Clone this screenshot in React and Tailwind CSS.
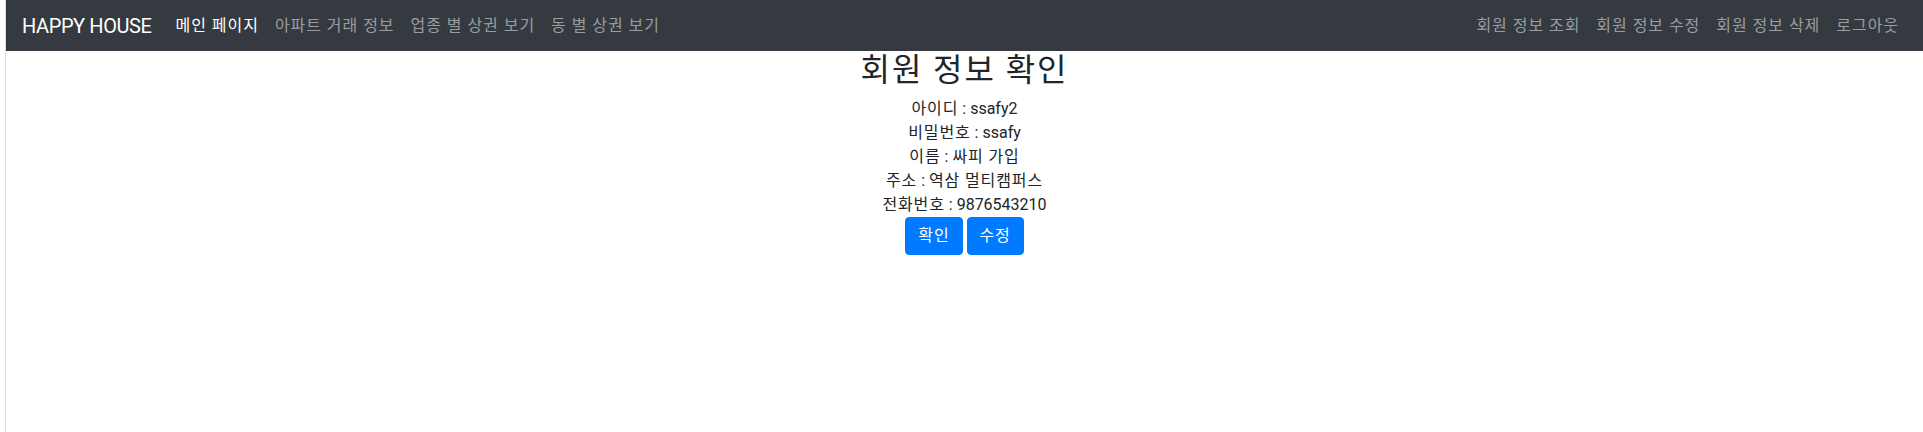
const leftLinks = ["아파트 거래 정보", "업종 별 상권 보기", "동 별 상권 보기"];
const rightLinks = ["회원 정보 조회", "회원 정보 수정", "회원 정보 삭제", "로그아웃"];

const rows = [
  { label: "아이디", value: "ssafy2", ko: false },
  { label: "비밀번호", value: "ssafy", ko: false },
  { label: "이름", value: "싸피 가입", ko: true },
  { label: "주소", value: "역삼 멀티캠퍼스", ko: true },
  { label: "전화번호", value: "9876543210", ko: false },
];

export default function App() {
  return (
    <div
      className="min-h-[432px] bg-white pl-[5px] text-[#212529]"
      style={{ fontFamily: 'Roboto, "Noto Sans CJK KR", sans-serif' }}
    >
      <div className="min-h-[432px] border-l border-[#dcdcdc]">
        {/* navbar */}
        <nav className="flex h-[51px] items-center bg-[#343a40] px-4">
          <span className="mr-4 text-[20px] leading-[30px] tracking-[-0.02em] text-white">HAPPY HOUSE</span>
          <span className="px-2 text-[16px] leading-6 tracking-[0.06em] text-white">메인 페이지</span>
          {leftLinks.map((l) => (
            <span key={l} className="px-2 text-[16px] leading-6 tracking-[0.06em] text-[#9a9da0]">
              {l}
            </span>
          ))}
          <div className="ml-auto flex">
            {rightLinks.map((l) => (
              <span key={l} className="px-2 text-[16px] leading-6 tracking-[0.06em] text-[#9a9da0]">
                {l}
              </span>
            ))}
          </div>
        </nav>

        {/* 회원 정보 */}
        <div className="flex flex-col items-center">
          <h2 className="mb-2 text-[32px] font-normal leading-[38px] tracking-[0.06em]">회원 정보 확인</h2>
          {rows.map((r) => (
            <div key={r.label} className="text-[16px] leading-6">
              <span className="tracking-[0.055em]">{r.label}</span> :{" "}
              <span className={r.ko ? "tracking-[0.055em]" : ""}>{r.value}</span>
            </div>
          ))}
          <div className="flex gap-1">
            <button className="rounded border border-[#007bff] bg-[#007bff] px-3 py-1.5 text-[16px] leading-6 tracking-[0.055em] text-white">
              확인
            </button>
            <button className="rounded border border-[#007bff] bg-[#007bff] px-3 py-1.5 text-[16px] leading-6 tracking-[0.055em] text-white">
              수정
            </button>
          </div>
        </div>
      </div>
    </div>
  );
}
